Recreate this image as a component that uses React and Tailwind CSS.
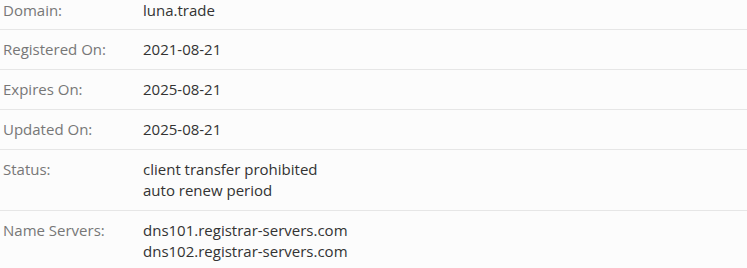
const rows = [
  { label: 'Domain:', values: ['luna.trade'] },
  { label: 'Registered On:', values: ['2021-08-21'] },
  { label: 'Expires On:', values: ['2025-08-21'] },
  { label: 'Updated On:', values: ['2025-08-21'] },
  { label: 'Status:', values: ['client transfer prohibited', 'auto renew period'] },
  { label: 'Name Servers:', values: ['dns101.registrar-servers.com', 'dns102.registrar-servers.com'] },
];

export default function App() {
  return (
    <div className="min-h-screen w-[747px] h-[268px] overflow-hidden bg-[#fcfcfc] font-['Open_Sans',sans-serif] text-[15px] leading-[21px]">
      {rows.map((row, idx) => (
        <div
          key={row.label}
          className={`flex ${idx === 0 ? 'pt-0 pb-[8px]' : 'py-[9px]'} ${idx < rows.length - 1 ? 'border-b border-[#e6e6e6]' : ''}`}
        >
          <div className="w-[143px] pl-[3px] text-[#777777]">{row.label}</div>
          <div className="text-[#333333]">
            {row.values.map((v) => (
              <div key={v}>{v}</div>
            ))}
          </div>
        </div>
      ))}
    </div>
  );
}
